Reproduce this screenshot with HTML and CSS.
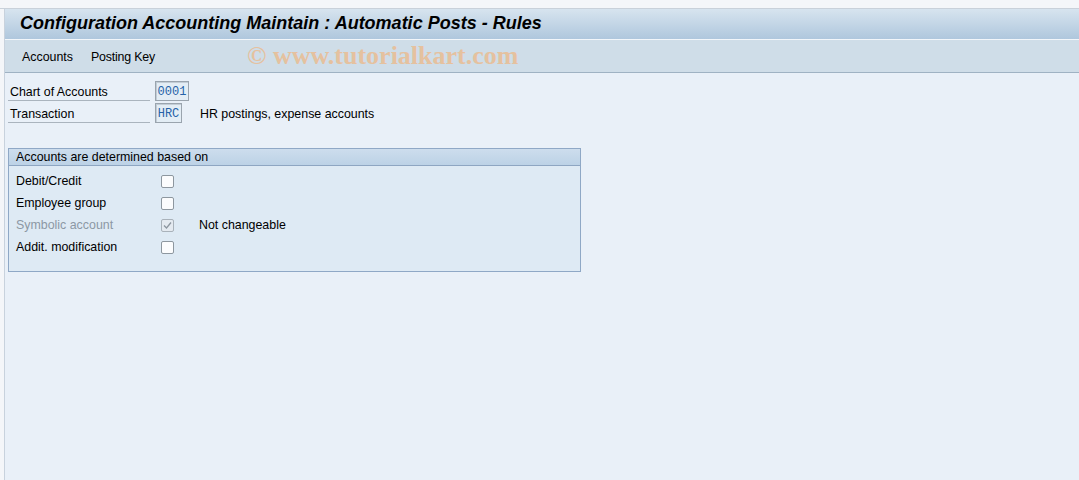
FILE: index.html
```html
<!DOCTYPE html>
<html lang="en">

<head>
    <meta charset="UTF-8">
    <meta name="viewport" content="width=device-width, initial-scale=1.0">
    <title>Automatic Posts - Rules</title>
    <link rel="stylesheet" href="styles.css">
</head>

<body>

    <div class="topstrip"></div>

    <div class="window">
        <div class="titlebar">
            <h1>Configuration Accounting Maintain : Automatic Posts - Rules</h1>
        </div>

        <div class="menubar">
            <span class="menu">Accounts</span>
            <span class="menu">Posting Key</span>
            <span class="watermark">© www.tutorialkart.com</span>
        </div>

        <div class="content">
            <div class="row">
                <span class="label">Chart of Accounts</span>
                <span class="field w4">0001</span>
            </div>
            <div class="row">
                <span class="label">Transaction</span>
                <span class="field w3">HRC</span>
                <span class="desc">HR postings, expense accounts</span>
            </div>

            <div class="group">
                <div class="group-head">Accounts are determined based on</div>
                <div class="group-body">
                    <div class="crow">
                        <span class="clabel">Debit/Credit</span>
                        <span class="check"></span>
                    </div>
                    <div class="crow">
                        <span class="clabel">Employee group</span>
                        <span class="check"></span>
                    </div>
                    <div class="crow off">
                        <span class="clabel">Symbolic account</span>
                        <span class="check on">
                            <svg width="9" height="9" viewBox="0 0 9 9"><path d="M1 4.5 L3.5 7 L8 1.5" fill="none" stroke="#8c969f" stroke-width="1.3"/></svg>
                        </span>
                        <span class="note">Not changeable</span>
                    </div>
                    <div class="crow">
                        <span class="clabel">Addit. modification</span>
                        <span class="check"></span>
                    </div>
                </div>
            </div>
        </div>
    </div>

</body>

</html>
```

FILE: styles.css
```css
*{
    margin: 0;
    padding: 0;
    box-sizing: border-box;
}
body{
    width: 1079px;
    height: 480px;
    overflow: hidden;
    background: #f4f6f9;
    font-family: "Liberation Sans", Arial, sans-serif;
    font-size: 12.4px;
    color: #000;
}
.topstrip{
    height: 9px;
    border-bottom: 1px solid #c9d1da;
}
.window{
    margin-left: 4px;
    height: 471px;
    border-left: 1px solid #c8d2dd;
    background: #e9f0f8;
}
.titlebar{
    height: 31px;
    display: flex;
    align-items: center;
    padding-left: 15px;
    background: linear-gradient(#d7e4ef, #afc7dd);
    border-bottom: 1px solid #f2f6fa;
}
h1{
    font-size: 18px;
    font-weight: bold;
    font-style: italic;
    padding-bottom: 1px;
}
.menubar{
    height: 33px;
    display: flex;
    align-items: center;
    padding-left: 17px;
    gap: 18px;
    background: #cfdde8;
    border-bottom: 1px solid #9fb2c3;
    position: relative;
}
.menu{
    padding-top: 2px;
}
.menu + .menu{
    letter-spacing: -0.2px;
}
.watermark{
    position: absolute;
    left: 242px;
    top: 1px;
    font-family: "Liberation Serif", "Times New Roman", serif;
    font-size: 26px;
    font-weight: bold;
    color: #ebbb8e;
    opacity: 0.8;
}
.content{
    padding: 8px 0 0 3px;
}
.row{
    height: 22px;
    display: flex;
    align-items: flex-start;
}
.label{
    width: 142px;
    height: 20px;
    line-height: 20px;
    padding: 1px 0 0 2px;
    border-bottom: 1px solid #aab4be;
}
.field{
    margin-left: 5px;
    height: 20px;
    line-height: 20px;
    text-align: center;
    font-family: "Liberation Mono", "Courier New", monospace;
    font-size: 12px;
    color: #2562a8;
    background: #e3edf5;
    border: 1px solid #9aa4ae;
    box-shadow: inset 1px 1px 0 #c3cdd6;
}
.w4{
    width: 34px;
}
.w3{
    width: 27px;
}
.desc{
    margin-left: 18px;
    line-height: 20px;
    padding-top: 1px;
}
.group{
    margin-top: 23px;
    width: 573px;
    border: 1px solid #8fa8c6;
}
.group-head{
    height: 17px;
    line-height: 16px;
    padding-left: 7px;
    background: linear-gradient(#cddded, #bcd2e6);
    border-bottom: 1px solid #8ea6c2;
}
.group-body{
    height: 105px;
    padding-top: 4px;
    background: #deeaf4;
}
.crow{
    height: 22px;
    display: flex;
    align-items: center;
    padding-left: 7px;
}
.clabel{
    width: 145px;
}
.off .clabel{
    color: #8c98a4;
}
.check{
    width: 13px;
    height: 13px;
    border: 1px solid #8d979f;
    border-radius: 2px;
    background: #fbfcfd;
    display: flex;
    align-items: center;
    justify-content: center;
}
.check.on{
    background: #e4eaf0;
    border-color: #a9b2ba;
}
.note{
    margin-left: 25px;
}
```
